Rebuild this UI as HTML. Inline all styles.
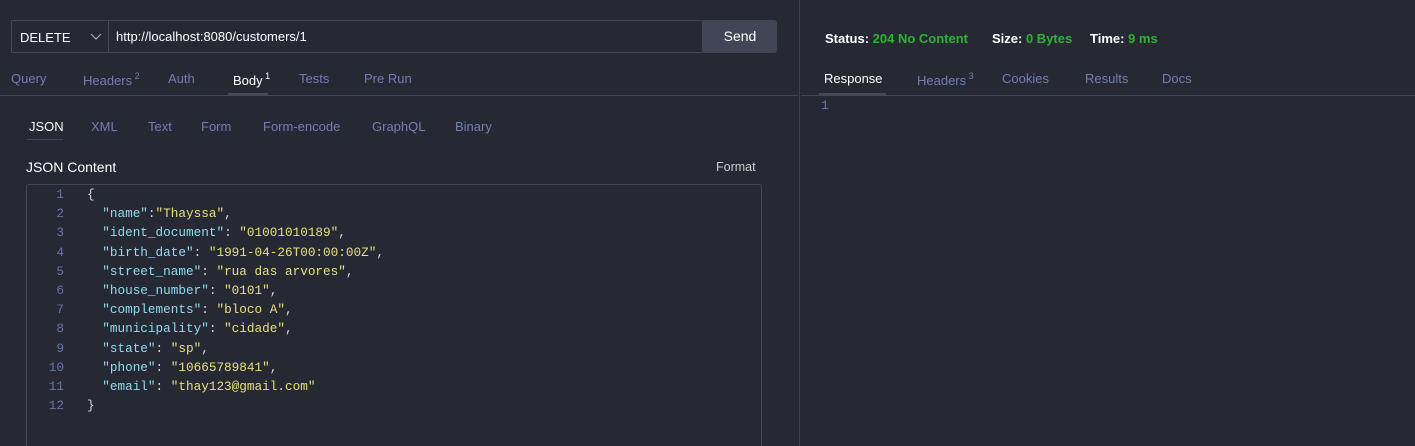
<!DOCTYPE html>
<html style="overflow:hidden"><head><style>
html,body{overflow:hidden;height:446px}
body{margin:0;width:1415px;background:#262833;font-family:"Liberation Sans",sans-serif;font-size:13px;color:#fff;position:relative}
.a{position:absolute;white-space:nowrap}
.tab{color:#6e7fb5;position:absolute;top:71px;font-size:13px}
.tab sup{font-size:9px;vertical-align:6px}
.st{color:#6e7fb5;position:absolute;top:119px;font-size:13px}
.code{position:absolute;left:0;top:185px;font-family:"Liberation Mono",monospace;font-size:12.7px;line-height:19.2px}
.ln{position:absolute;left:36px;width:28px;text-align:right;color:#6774ad}
.k{color:#8fdcf3}.v{color:#e6e07c}.p{color:#d9d9d9}
</style></head><body>
<div class="a" style="left:11px;top:20px;width:692px;border:1px solid #444757;border-radius:2px;box-sizing:border-box;height:33px"></div>
<div class="a" style="left:108px;top:20px;width:1px;height:33px;background:#444757"></div>
<div class="a" style="left:20px;top:30px;font-size:13px">DELETE</div>
<svg class="a" style="left:90px;top:33px" width="12" height="8"><path d="M1 1 L6 6 L11 1" stroke="#aaa" fill="none" stroke-width="1.2"/></svg>
<div class="a" style="left:116px;top:29px;font-size:13px">http://localhost:8080/customers/1</div>
<div class="a" style="left:703px;top:20px;width:74px;height:33px;background:#424555;border-radius:0 3px 3px 0;text-align:center;line-height:33px;font-size:14px">Send</div>
<div class="tab" style="left:11px">Query</div>
<div class="tab" style="left:83px">Headers<sup> 2</sup></div>
<div class="tab" style="left:168px">Auth</div>
<div class="tab" style="left:233px;color:#fff">Body<sup> 1</sup></div>
<div class="a" style="left:228px;top:93px;width:40px;height:2px;background:#444757"></div>
<div class="tab" style="left:299px">Tests</div>
<div class="tab" style="left:364px">Pre Run</div>
<div class="a" style="left:0;top:95px;width:798px;height:1px;background:#434656"></div>
<div class="a" style="left:799px;top:0;width:1px;height:446px;background:#3d4050"></div>
<div class="st" style="left:29px;color:#fff">JSON</div>
<div class="a" style="left:27px;top:139px;width:36px;height:1px;background:#444757"></div>
<div class="st" style="left:91px">XML</div>
<div class="st" style="left:148px">Text</div>
<div class="st" style="left:201px">Form</div>
<div class="st" style="left:263px">Form-encode</div>
<div class="st" style="left:372px">GraphQL</div>
<div class="st" style="left:455px">Binary</div>
<div class="a" style="left:26px;top:159px;font-size:14px">JSON Content</div>
<div class="a" style="left:716px;top:160px;font-size:12.5px;color:#ccc">Format</div>
<div class="a" style="left:26px;top:184px;width:736px;height:270px;border:1px solid #434656;border-radius:3px;box-sizing:border-box"></div>
<div class="code">
<div class="ln" style="top:0">1<br>2<br>3<br>4<br>5<br>6<br>7<br>8<br>9<br>10<br>11<br>12</div>
<div class="a p" style="left:87px;top:0">{<br>
&nbsp;&nbsp;<span class="k">"name"</span>:<span class="v">"Thayssa"</span>,<br>
&nbsp;&nbsp;<span class="k">"ident_document"</span>: <span class="v">"01001010189"</span>,<br>
&nbsp;&nbsp;<span class="k">"birth_date"</span>: <span class="v">"1991-04-26T00:00:00Z"</span>,<br>
&nbsp;&nbsp;<span class="k">"street_name"</span>: <span class="v">"rua das arvores"</span>,<br>
&nbsp;&nbsp;<span class="k">"house_number"</span>: <span class="v">"0101"</span>,<br>
&nbsp;&nbsp;<span class="k">"complements"</span>: <span class="v">"bloco A"</span>,<br>
&nbsp;&nbsp;<span class="k">"municipality"</span>: <span class="v">"cidade"</span>,<br>
&nbsp;&nbsp;<span class="k">"state"</span>: <span class="v">"sp"</span>,<br>
&nbsp;&nbsp;<span class="k">"phone"</span>: <span class="v">"10665789841"</span>,<br>
&nbsp;&nbsp;<span class="k">"email"</span>: <span class="v">"thay123@gmail.com"</span><br>
}</div>
</div>
<div class="a" style="left:825px;top:31px;font-weight:bold;font-size:13px">Status: <span style="color:#2bb52f">204 No Content</span></div>
<div class="a" style="left:992px;top:31px;font-weight:bold;font-size:13px">Size: <span style="color:#2bb52f">0 Bytes</span></div>
<div class="a" style="left:1090px;top:31px;font-weight:bold;font-size:13px">Time: <span style="color:#2bb52f">9 ms</span></div>
<div class="tab" style="left:824px;color:#fff">Response</div>
<div class="a" style="left:819px;top:93px;width:67px;height:2px;background:#444757"></div>
<div class="tab" style="left:917px">Headers<sup> 3</sup></div>
<div class="tab" style="left:1002px">Cookies</div>
<div class="tab" style="left:1085px">Results</div>
<div class="tab" style="left:1162px">Docs</div>
<div class="a" style="left:801px;top:95px;width:614px;height:1px;background:#434656"></div>
<div class="a" style="left:821px;top:98px;font-family:'Liberation Mono',monospace;font-size:13px;color:#6774ad">1</div>
</body></html>
